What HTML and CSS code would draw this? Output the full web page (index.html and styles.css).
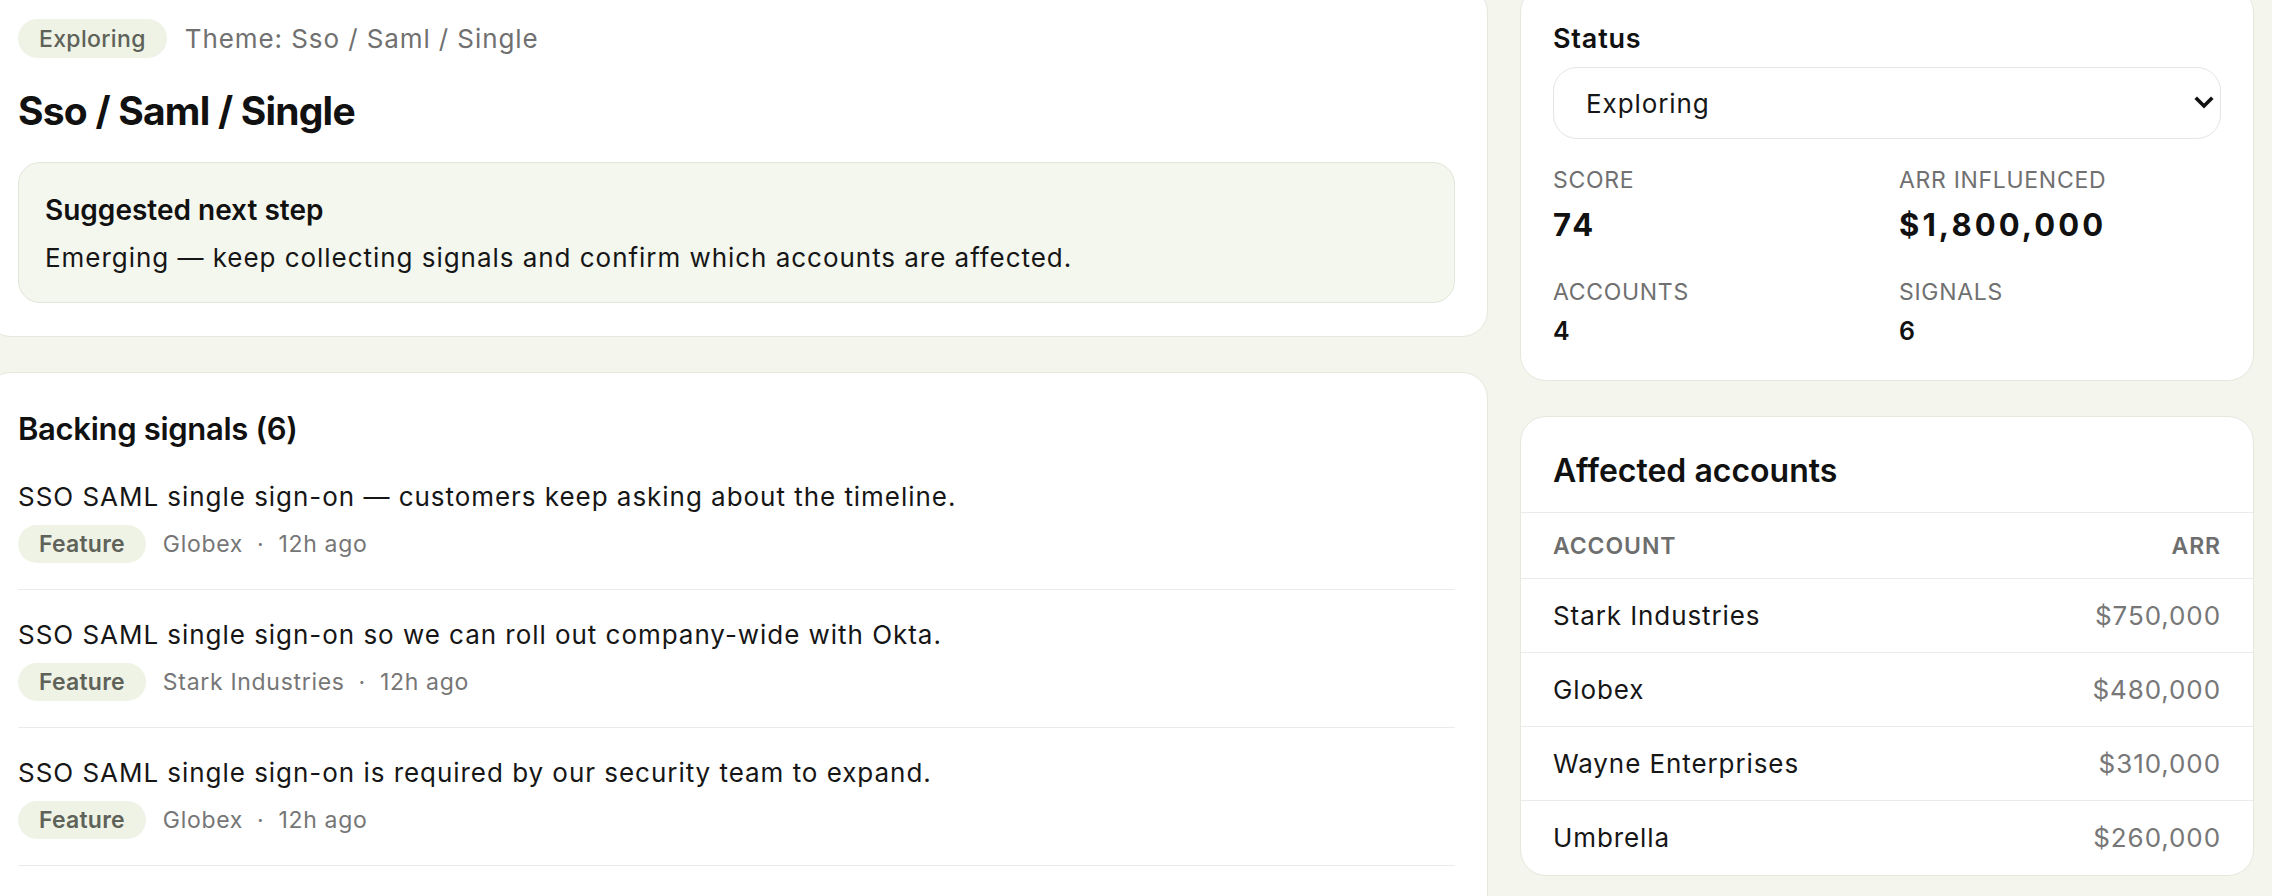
FILE: index.html
```html
<!DOCTYPE html>
<html lang="en">
<head>
<meta charset="utf-8">
<title>Sso / Saml / Single</title>
<link rel="stylesheet" href="styles.css">
</head>
<body>
<div class="layout">
  <div class="col">
    <section class="card card-head">
      <div class="crumbs">
        <span class="pill">Exploring</span>
        <span class="crumb-text">Theme: Sso / Saml / Single</span>
      </div>
      <h1 class="title">Sso / Saml / Single</h1>
      <div class="suggest">
        <h3 class="suggest-title">Suggested next step</h3>
        <p class="suggest-text">Emerging — keep collecting signals and confirm which accounts are affected.</p>
      </div>
    </section>
    <section class="card card-signals">
      <h2 class="card-title">Backing signals (6)</h2>
      <ul class="signals">
        <li class="signal">
          <p class="signal-text">SSO SAML single sign-on — customers keep asking about the timeline.</p>
          <div class="meta"><span class="pill pill-sm">Feature</span><span class="meta-item">Globex</span><span class="dot">·</span><span class="meta-item">12h ago</span></div>
        </li>
        <li class="signal">
          <p class="signal-text">SSO SAML single sign-on so we can roll out company-wide with Okta.</p>
          <div class="meta"><span class="pill pill-sm">Feature</span><span class="meta-item">Stark Industries</span><span class="dot">·</span><span class="meta-item">12h ago</span></div>
        </li>
        <li class="signal">
          <p class="signal-text">SSO SAML single sign-on is required by our security team to expand.</p>
          <div class="meta"><span class="pill pill-sm">Feature</span><span class="meta-item">Globex</span><span class="dot">·</span><span class="meta-item">12h ago</span></div>
        </li>
        <li class="signal">
          <p class="signal-text">SSO SAML single sign-on is blocking our procurement review.</p>
          <div class="meta"><span class="pill pill-sm">Feature</span><span class="meta-item">Wayne Enterprises</span><span class="dot">·</span><span class="meta-item">12h ago</span></div>
        </li>
        <li class="signal">
          <p class="signal-text">SSO SAML single sign-on is needed before renewal.</p>
          <div class="meta"><span class="pill pill-sm">Feature</span><span class="meta-item">Umbrella</span><span class="dot">·</span><span class="meta-item">12h ago</span></div>
        </li>
        <li class="signal">
          <p class="signal-text">SSO SAML single sign-on with our identity provider.</p>
          <div class="meta"><span class="pill pill-sm">Feature</span><span class="meta-item">Stark Industries</span><span class="dot">·</span><span class="meta-item">12h ago</span></div>
        </li>
      </ul>
    </section>
  </div>
  <aside class="col">
    <section class="card card-status">
      <label class="field-label" for="status">Status</label>
      <div class="select-wrap">
        <select id="status" class="select">
          <option>Exploring</option>
          <option>Planned</option>
          <option>Shipped</option>
        </select>
        <svg class="chevron" width="20" height="14" viewBox="0 0 20 14" aria-hidden="true"><path d="M3 3 L10 10 L17 3" fill="none" stroke="#111" stroke-width="3.6" stroke-linecap="square"/></svg>
      </div>
      <div class="stats">
        <div class="stat">
          <div class="stat-label">Score</div>
          <div class="stat-big">74</div>
        </div>
        <div class="stat">
          <div class="stat-label">ARR influenced</div>
          <div class="stat-big">$1,800,000</div>
        </div>
        <div class="stat">
          <div class="stat-label">Accounts</div>
          <div class="stat-small">4</div>
        </div>
        <div class="stat">
          <div class="stat-label">Signals</div>
          <div class="stat-small">6</div>
        </div>
      </div>
    </section>
    <section class="card card-flush">
      <h2 class="card-title table-title">Affected accounts</h2>
      <table class="accounts">
        <thead>
          <tr><th>Account</th><th class="num">ARR</th></tr>
        </thead>
        <tbody>
          <tr><td>Stark Industries</td><td class="num">$750,000</td></tr>
          <tr><td>Globex</td><td class="num">$480,000</td></tr>
          <tr><td>Wayne Enterprises</td><td class="num">$310,000</td></tr>
          <tr><td>Umbrella</td><td class="num">$260,000</td></tr>
        </tbody>
      </table>
    </section>
  </aside>
</div>
</body>
</html>
```

FILE: styles.css
```css
* { box-sizing: border-box; }

html, body {
  margin: 0;
  padding: 0;
  background: #f4f6ee;
  font-family: Inter, "Noto Sans", "Liberation Sans", sans-serif;
  color: #161616;
  overflow: hidden;
}

.layout {
  display: grid;
  grid-template-columns: minmax(0, 1fr) 734px;
  column-gap: 32px;
  margin: -14px 18px 0 -15px;
  align-items: start;
}

.col {
  display: flex;
  flex-direction: column;
  gap: 35px;
}

.col-main {
  gap: 34px;
}

.card {
  background: #fff;
  border: 1px solid #e5e8de;
  border-radius: 26px;
  padding: 32px;
}

.card-flush {
  padding: 0;
  overflow: hidden;
}

.card-head {
  padding-bottom: 33px;
}

.card-signals {
  padding-top: 35px;
}

.card-status {
  padding-bottom: 34px;
}

/* ---------- header card ---------- */
.crumbs {
  display: flex;
  align-items: center;
  gap: 18px;
}

.pill {
  display: inline-flex;
  align-items: center;
  height: 39px;
  padding: 0 21px;
  border-radius: 999px;
  background: #eff3e6;
  color: #5e6259;
  font-size: 23px;
  font-weight: 500;
  letter-spacing: 0.015em;
}

.crumb-text {
  font-size: 26px;
  letter-spacing: 0.035em;
  color: #707070;
}

.title {
  margin: 29px 0 0;
  font-size: 39px;
  line-height: 48px;
  font-weight: 700;
  letter-spacing: -0.02em;
  color: #111;
}

.suggest {
  margin-top: 27px;
  background: #f4f7ee;
  border: 1px solid #e2e6d9;
  border-radius: 22px;
  padding: 29px 26px 26px;
}

.suggest-title {
  margin: 0 0 12px;
  font-size: 28px;
  line-height: 36px;
  font-weight: 600;
  color: #111;
}

.suggest-text {
  margin: 0;
  font-size: 26px;
  line-height: 36px;
  letter-spacing: 0.037em;
  color: #161616;
}

/* ---------- signals ---------- */
.card-title {
  margin: 0;
  font-size: 31px;
  line-height: 42px;
  font-weight: 600;
  letter-spacing: -0.01em;
  color: #111;
}

.signals {
  list-style: none;
  margin: 2px 0 0;
  padding: 0;
}

.signal {
  padding: 27px 0 26px;
  border-bottom: 1px solid #ebece7;
}

.signal-text {
  margin: 0;
  font-size: 26px;
  line-height: 36px;
  letter-spacing: 0.037em;
  color: #161616;
}

.meta {
  display: flex;
  align-items: center;
  margin-top: 10px;
  font-size: 23px;
  letter-spacing: 0.03em;
  color: #767676;
}

.pill-sm {
  height: 38px;
  font-size: 23px;
  font-weight: 600;
  letter-spacing: 0.01em;
  margin-right: 17px;
}

.dot {
  margin: 0 14px;
}

/* ---------- status card ---------- */
.field-label {
  display: block;
  font-size: 27px;
  line-height: 40px;
  font-weight: 600;
  letter-spacing: 0.03em;
  color: #111;
}

.select-wrap {
  position: relative;
  margin-top: 8px;
}

.select {
  display: block;
  width: 100%;
  height: 72px;
  padding: 0 60px 0 32px;
  border: 1px solid #e5e6e1;
  border-radius: 24px;
  background: #fff;
  font-family: inherit;
  font-size: 26px;
  letter-spacing: 0.035em;
  color: #161616;
  appearance: none;
  -webkit-appearance: none;
  outline: none;
}

.chevron {
  position: absolute;
  right: 7px;
  top: 29px;
  pointer-events: none;
}

.stats {
  display: grid;
  grid-template-columns: 1fr 1fr;
  column-gap: 24px;
  row-gap: 34px;
  margin-top: 26px;
}

.stat-label {
  font-size: 23px;
  line-height: 30px;
  letter-spacing: 0.03em;
  text-transform: uppercase;
  color: #707070;
}

.stat-big {
  margin-top: 12px;
  font-size: 31px;
  line-height: 36px;
  font-weight: 700;
  letter-spacing: 0.1em;
  color: #111;
}

.stat-small {
  margin-top: 10px;
  font-size: 25px;
  line-height: 29px;
  font-weight: 600;
  letter-spacing: 0.04em;
  color: #111;
}

/* ---------- accounts table ---------- */
.table-title {
  padding: 33px 32px 20px;
  font-size: 32px;
  letter-spacing: 0;
}

.accounts {
  width: 100%;
  border-collapse: collapse;
}

.accounts th,
.accounts td {
  padding: 0 32px;
  text-align: left;
  border-top: 1px solid #ebebe8;
}

.accounts th {
  height: 66px;
  font-size: 23px;
  font-weight: 600;
  text-transform: uppercase;
  letter-spacing: 0.04em;
  color: #6e6e6e;
}

.accounts td {
  height: 74px;
  font-size: 26px;
  letter-spacing: 0.035em;
  color: #161616;
}

.accounts .num {
  text-align: right;
}

.accounts td.num {
  color: #777;
}
```
